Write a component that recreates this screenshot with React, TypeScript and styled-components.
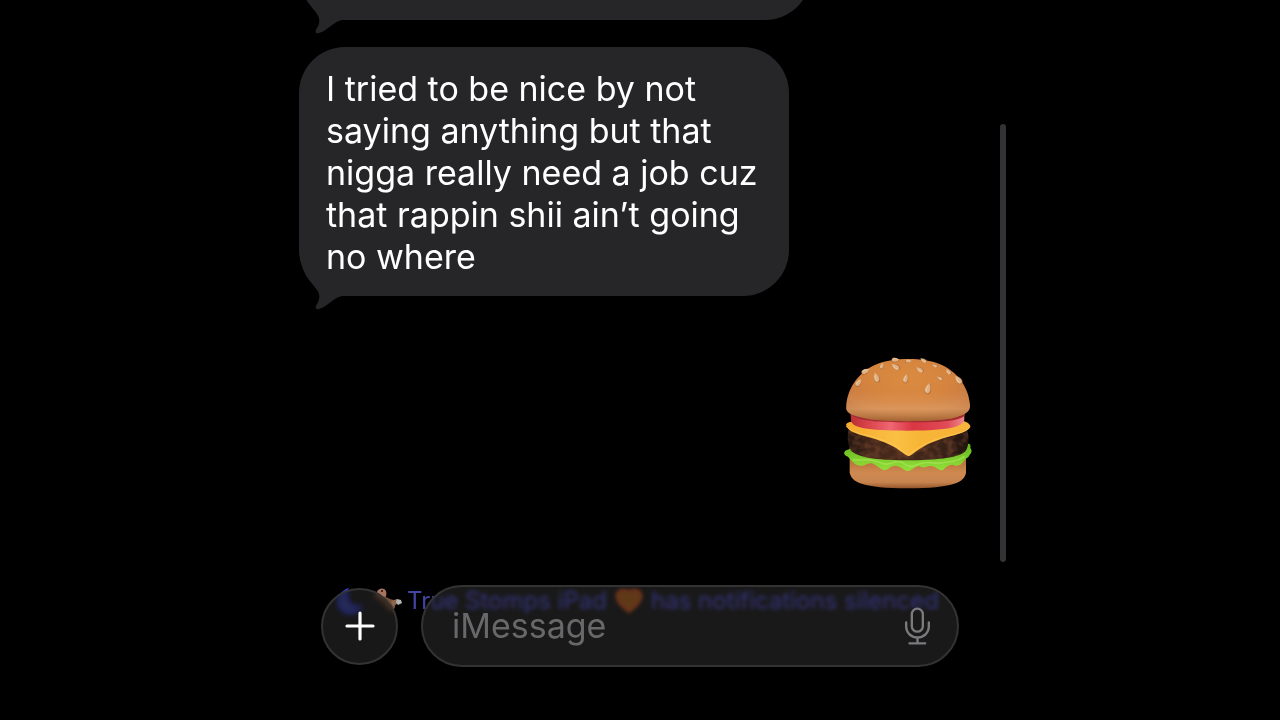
import React from "react";
import styled, { createGlobalStyle } from "styled-components";

const GlobalStyle = createGlobalStyle`
  *, *::before, *::after { box-sizing: border-box; }
  body { margin: 0; background: #000; font-family: Inter, "Liberation Sans", sans-serif; }
`;

const Phone = styled.div`
  position: relative;
  display: flex;
  flex-direction: column;
  width: 100%;
  max-width: 736px;
  height: 100vh;
  margin: 0 auto;
  color: #fff;
`;

const Thread = styled.main`
  display: flex;
  flex: 1;
  flex-direction: column;
  align-items: flex-start;
  min-height: 0;
  padding: 0 35px 0 27px;
  overflow: hidden;
`;

const Bubble = styled.div<{ $maxWidth: number }>`
  position: relative;
  flex-shrink: 0;
  width: 100%;
  max-width: ${(p) => p.$maxWidth}px;
  margin-bottom: 27px;
  padding: 21px 27px 18px;
  border-radius: 46px;
  background: #262628;
`;

const EarlierBubble = styled(Bubble)`
  height: 100px;
  margin-top: -80px;
`;

const BubbleText = styled.p`
  position: relative;
  margin: 0;
  font-size: 34px;
  line-height: 42px;
`;

const TailIcon = styled.svg`
  position: absolute;
  left: 0;
  bottom: -14px;
  width: 52px;
  height: 44px;
`;

const Sticker = styled.div`
  flex-shrink: 0;
  align-self: flex-end;
  margin-top: 34px;
  line-height: 0;
`;

const ScrollThumb = styled.div`
  position: absolute;
  top: 124px;
  right: 2px;
  bottom: 158px;
  width: 6px;
  border-radius: 3px;
  background: #333335;
`;

const Composer = styled.form`
  position: relative;
  display: flex;
  align-items: center;
  gap: 23px;
  padding: 0 49px 53px;
`;

const Notice = styled.div`
  position: absolute;
  top: 0;
  left: 65px;
  display: flex;
  align-items: center;
  gap: 4px;
  height: 32px;
  color: #4444a4;
  font-size: 24px;
  line-height: 32px;
  white-space: nowrap;
`;

const HeartIcon = styled.svg`
  flex-shrink: 0;
  margin: 0 4px;
`;

const GlassButton = styled.button`
  position: relative;
  display: grid;
  flex-shrink: 0;
  place-items: center;
  width: 77px;
  height: 77px;
  padding: 0;
  border: 2px solid #333;
  border-radius: 50%;
  background: rgba(32, 32, 32, 0.76);
  backdrop-filter: blur(3px) saturate(1.8) brightness(1.6);
`;

const Field = styled.div`
  position: relative;
  display: flex;
  flex: 1;
  align-items: center;
  min-width: 0;
  height: 82px;
  padding: 0 25px 0 29px;
  border: 2px solid #333;
  border-radius: 41px;
  background: rgba(34, 34, 34, 0.72);
  backdrop-filter: blur(2px) saturate(1.8) brightness(1.5);
`;

const MessageInput = styled.input`
  flex: 1;
  min-width: 0;
  padding: 0;
  border: 0;
  outline: 0;
  background: transparent;
  color: #fff;
  font: 34px/44px Inter, "Liberation Sans", sans-serif;
  &::placeholder { color: #68686b; opacity: 1; }
`;

const MicButton = styled.button`
  padding: 0;
  border: 0;
  background: transparent;
  line-height: 0;
`;

const Tail = () => (
  <TailIcon viewBox="0 0 52 44" aria-hidden="true">
    <path
      d="M4 3C7 12 14 18 18 24C21 28 21 33 18 38C16 41 16 44 20 43C28 41 34 32 43 30L52 30V3Z"
      fill="#262628"
    />
  </TailIcon>
);

const seeds: [number, number, number, number][] = [
  [108, 78, 62, 1], [87, 112, 38, 1], [140, 97, -20, 1.1], [197, 65, -55, 1],
  [157, 62, 20, 0.7], [228, 100, 12, 1], [270, 74, -55, 0.9], [295, 130, 12, 1.2],
  [315, 62, -70, 0.6], [330, 99, -62, 0.7], [356, 80, -40, 0.8], [386, 104, -40, 1.1],
  [198, 44, 88, 0.9], [237, 48, 88, 0.7], [281, 46, -60, 0.8],
];

const Burger = () => (
  <svg width="130" height="132" viewBox="40 36 390 396" role="img" aria-label="Hamburger">
    <defs>
      <radialGradient id="bun" cx="0.5" cy="0.32" r="0.68">
        <stop offset="0" stopColor="#db8b40" />
        <stop offset="0.5" stopColor="#d5843f" />
        <stop offset="0.82" stopColor="#c97c42" />
        <stop offset="1" stopColor="#b26a38" />
      </radialGradient>
      <linearGradient id="bunShade" x1="0" y1="0" x2="0" y2="1">
        <stop offset="0.5" stopColor="#e39a5a" stopOpacity="0" />
        <stop offset="0.8" stopColor="#e6a870" stopOpacity="0.55" />
        <stop offset="1" stopColor="#a0602f" stopOpacity="0.8" />
      </linearGradient>
      <linearGradient id="base" x1="0" y1="0" x2="0" y2="1">
        <stop offset="0.1" stopColor="#b87238" />
        <stop offset="0.5" stopColor="#cf8a52" />
        <stop offset="0.8" stopColor="#c8844e" />
        <stop offset="1" stopColor="#94552b" />
      </linearGradient>
      <linearGradient id="tomato">
        <stop offset="0" stopColor="#b82f35" />
        <stop offset="0.14" stopColor="#d84148" />
        <stop offset="0.35" stopColor="#ef6672" />
        <stop offset="0.55" stopColor="#d93643" />
        <stop offset="0.85" stopColor="#e04b57" />
        <stop offset="1" stopColor="#ee8a8b" />
      </linearGradient>
      <linearGradient id="cheese">
        <stop offset="0" stopColor="#f5aa2d" />
        <stop offset="0.4" stopColor="#fac044" />
        <stop offset="0.6" stopColor="#f7b536" />
        <stop offset="1" stopColor="#f8b43b" />
      </linearGradient>
      <linearGradient id="patty">
        <stop offset="0" stopColor="#261811" />
        <stop offset="0.25" stopColor="#49291a" />
        <stop offset="0.75" stopColor="#3c2419" />
        <stop offset="1" stopColor="#20130e" />
      </linearGradient>
      <linearGradient id="lettuce" x1="0" y1="0" x2="0" y2="1">
        <stop offset="0" stopColor="#64b71f" />
        <stop offset="1" stopColor="#95df3b" />
      </linearGradient>
      <filter id="char" x="0" y="0" width="1" height="1" colorInterpolationFilters="sRGB">
        <feTurbulence type="fractalNoise" baseFrequency="0.04 0.05" numOctaves="2" seed="4" />
        <feColorMatrix values="0 0 0 0 0.42  0 0 0 0 0.25  0 0 0 0 0.17  3 0 0 0 -1.2" />
        <feComposite in2="SourceGraphic" operator="in" />
      </filter>
    </defs>
    <path d="M60 338H409V382C406 412 370 430 234 430C100 430 64 412 60 382Z" fill="url(#base)" />
    <path d="M44 322C48 313 55 317 61 310L70 315H402L414 297C421 294 424 301 422 309C428 316 426 324 420 329C417 339 407 339 402 349C393 363 383 363 373 361C361 356 351 365 341 374C329 380 320 366 308 364C294 360 282 374 270 363C257 363 247 377 234 378C222 377 213 363 200 363C187 359 179 372 165 376C151 374 140 358 125 355C113 352 106 364 93 362C80 361 73 355 65 347C59 342 58 335 50 333C45 331 42 326 44 322Z" fill="url(#lettuce)" />
    <path d="M70 344C105 348 116 340 137 348S172 362 194 352S224 362 241 364S270 349 300 353S350 352 373 348S398 337 405 333" fill="none" stroke="#b5ed63" strokeWidth="5" opacity=".5" />
    <path d="M56 255C80 248 390 248 414 258C419 285 416 307 407 319C386 340 310 346 236 346C157 346 91 341 66 319C55 307 52 281 56 255Z" fill="url(#patty)" />
    <path d="M56 255C80 248 390 248 414 258C419 285 416 307 407 319C386 340 310 346 236 346C157 346 91 341 66 319C55 307 52 281 56 255Z" fill="#fff" filter="url(#char)" opacity=".7" />
    <path d="M49 239C53 231 64 229 73 231L400 229C410 229 420 236 422 244C420 256 396 266 362 274C330 283 300 293 276 308C259 318 247 330 237 334C226 330 215 320 199 309C178 296 150 285 112 275C74 265 53 256 49 239Z" fill="url(#cheese)" />
    <path d="M49 243C60 262 105 268 140 279C184 292 218 315 237 330C259 311 291 292 330 280C363 269 408 264 422 246" fill="none" stroke="#ffd063" strokeWidth="3" opacity=".6" />
    <path d="M63 207H404V222C404 243 367 257 234 257C108 257 66 248 64 226Z" fill="url(#tomato)" />
    <path d="M63 207C85 231 157 231 234 232C314 232 388 230 405 212V206Z" fill="#a32c32" />
    <path d="M50 182C53 126 93 75 143 57C190 38 281 37 329 57C379 76 417 124 421 180C423 202 401 211 371 219C325 231 147 232 103 219C67 211 46 204 50 182Z" fill="url(#bun)" />
    <path d="M50 182C53 126 93 75 143 57C190 38 281 37 329 57C379 76 417 124 421 180C423 202 401 211 371 219C325 231 147 232 103 219C67 211 46 204 50 182Z" fill="url(#bunShade)" />
    {seeds.map(([x, y, angle, size], i) => (
      <g key={i} transform={`translate(${x} ${y}) rotate(${angle}) scale(${size})`}>
        <path d="M2 -12C9 -3 11 8 5 14C-1 17 -8 12 -7 5C-6 -2 -2 -8 2 -12Z" fill="#8e5128" opacity=".5" />
        <path d="M0 -13C6 -7 9 5 4 11C0 15 -6 12 -7 6C-7 -1 -4 -8 0 -13Z" fill="#deb184" />
        <path d="M-1 -6C-4 0 -5 5 -2 8" stroke="#f4d3ad" strokeWidth="2" fill="none" />
      </g>
    ))}
  </svg>
);

const Moon = () => (
  <svg width="28" height="28" viewBox="0 0 28 28" aria-hidden="true">
    <path d="M12 1C0 4-1 17 5 23C12 29 23 26 26 18C19 22 11 19 10 12C9 8 10 4 12 1Z" fill="#363ed0" />
  </svg>
);

const Otter = () => (
  <svg width="34" height="26" viewBox="0 0 34 26" aria-hidden="true">
    <path d="M8 4C9 0 15-1 17 3C18 7 17 11 13 11L6 8Z" fill="#a57360" />
    <circle cx="13" cy="3" r="1" fill="#20120e" />
    <path d="M13 8C17 8 19 11 25 12C27 15 27 21 23 23C19 21 15 15 12 10Z" fill="#735039" />
    <path d="M22 13L28 11L30 15L24 18Z" fill="#8b684d" />
    <path d="M28 11L32 12L33 15L29 17L27 14Z" fill="#b5b5b7" />
  </svg>
);

const Heart = () => (
  <HeartIcon width="28" height="26" viewBox="0 0 28 26" aria-hidden="true">
    <path d="M14 25C7 19 1 14 1 8C1 1 10-1 14 3C18-1 27 1 27 8C27 14 20 20 14 25Z" fill="#b85a1c" />
  </HeartIcon>
);

export default function App() {
  return (
    <>
      <GlobalStyle />
      <Phone>
        <Thread>
          <EarlierBubble $maxWidth={512}>
            <Tail />
          </EarlierBubble>
          <Bubble $maxWidth={490}>
            <Tail />
            <BubbleText>
              I tried to be nice by not saying anything but that nigga really need a job cuz that
              rappin shii ain’t going no where
            </BubbleText>
          </Bubble>
          <Sticker>
            <Burger />
          </Sticker>
        </Thread>
        <ScrollThumb />
        <Composer onSubmit={(e) => e.preventDefault()}>
          <Notice>
            <Moon />
            <Otter />
            <span>True Stomps iPad</span>
            <Heart />
            <span>has notifications silenced</span>
          </Notice>
          <GlassButton type="button" aria-label="Add attachment">
            <svg width="30" height="30" viewBox="0 0 30 30" aria-hidden="true">
              <path d="M15 2V28M2 15H28" stroke="#fff" strokeWidth="3.2" strokeLinecap="round" />
            </svg>
          </GlassButton>
          <Field>
            <MessageInput type="text" placeholder="iMessage" aria-label="iMessage" />
            <MicButton type="button" aria-label="Dictate">
              <svg width="29" height="40" viewBox="552 92 86 120" fill="none" stroke="#7b7b7e" strokeWidth="7" strokeLinecap="round" aria-hidden="true">
                <rect x="578" y="100" width="33" height="69" rx="16.5" />
                <path d="M561 141V152C561 173 576 186 595 186S629 173 629 152V141M595 186V204M571 204H618" />
              </svg>
            </MicButton>
          </Field>
        </Composer>
      </Phone>
    </>
  );
}
